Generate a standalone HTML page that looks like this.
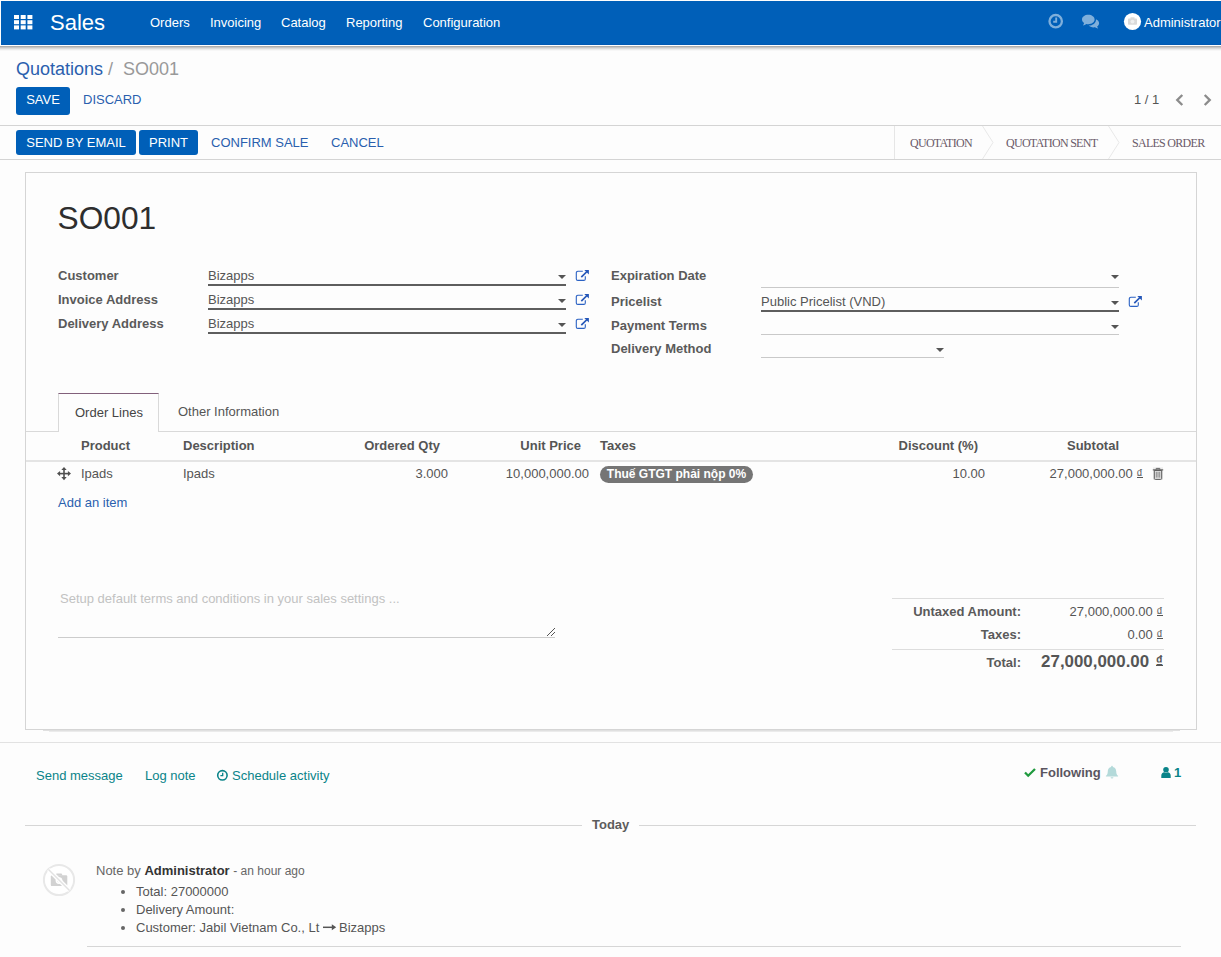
<!DOCTYPE html>
<html>
<head>
<meta charset="utf-8">
<title>SO001 - Odoo</title>
<style>
*{box-sizing:border-box;margin:0;padding:0}
html,body{width:1221px;height:957px;overflow:hidden;background:#fdfdfd}
body{position:relative;font-family:"Liberation Sans",Arial,sans-serif;font-size:13px;color:#4c4c4c;line-height:1}
.a{position:absolute;white-space:nowrap}
.b{font-weight:bold}
.r{text-align:right}
/* navbar */
#nav{left:1px;top:1px;width:1220px;height:44px;background:#005fb8;border-bottom:1px solid #0059b3}
#navsh{left:0;top:45px;width:1221px;height:6px;background:linear-gradient(#fff 0,#fff 1px,#adadad 1px,#adadad 2px,#c6c6c6 2px,#c6c6c6 3px,#dadada 3px,#dadada 4px,#ebebeb 4px,#ebebeb 5px,#f7f7f7 5px,#f7f7f7 6px)}
.nm{color:#fff;font-size:13px;top:15.500px}
/* buttons */
.btn{background:#005fb8;color:#fff;border-radius:3px;text-align:center;font-size:13px}
.lnk{color:#2a5fae;font-size:13px}
.hl{background:#d4d4d4;height:1px}
.lbl{font-weight:bold;color:#5a5a5a;font-size:13px}
.val{color:#555;font-size:13px}
.ul{height:2px;background:#5e5e5e}
.ull{height:1px;background:#c9c9c9}
.dg{position:relative}.dg:after{content:"";position:absolute;left:.5px;right:.5px;bottom:3px;height:1px;background:#555}
.car{width:0;height:0;border-left:4px solid transparent;border-right:4px solid transparent;border-top:4px solid #555}
.th{font-weight:bold;color:#555;font-size:13px;top:439px}
.td{color:#555;font-size:13px;top:467px}
.teal{color:#0a8489;font-size:13px}
.sb{font-family:"Liberation Serif","DejaVu Serif",serif;font-size:12px;letter-spacing:-.72px;color:#6a5a68;top:137px}
</style>
</head>
<body>
<!-- NAVBAR -->
<div class="a" id="nav"></div>
<div class="a" id="navsh"></div>
<svg class="a" style="left:14px;top:15px" width="19" height="15" viewBox="0 0 19 15"><g fill="#fff"><rect x="0" y="0" width="5" height="4"/><rect x="6.7" y="0" width="5" height="4"/><rect x="13.4" y="0" width="5" height="4"/><rect x="0" y="5.2" width="5" height="4"/><rect x="6.7" y="5.2" width="5" height="4"/><rect x="13.4" y="5.2" width="5" height="4"/><rect x="0" y="10.4" width="5" height="4"/><rect x="6.7" y="10.4" width="5" height="4"/><rect x="13.4" y="10.4" width="5" height="4"/></g></svg>
<div class="a" style="left:50px;top:12px;font-size:22px;color:#fff">Sales</div>
<div class="a nm" style="left:150px">Orders</div>
<div class="a nm" style="left:210px">Invoicing</div>
<div class="a nm" style="left:281px">Catalog</div>
<div class="a nm" style="left:346px">Reporting</div>
<div class="a nm" style="left:423px">Configuration</div>
<svg class="a" style="left:1046px;top:12px" width="20" height="20" viewBox="0 0 20 20"><circle cx="9.7" cy="9.2" r="6.2" fill="none" stroke="#7fafdb" stroke-width="2.3"/><path d="M10.2 5.6v4.2h-3" fill="none" stroke="#7fafdb" stroke-width="1.9"/></svg>
<svg class="a" style="left:1080px;top:12px" width="22" height="20" viewBox="0 0 22 20"><g fill="#7fafdb"><path d="M8.3 2.8c3.5 0 6.3 2.1 6.3 4.7s-2.800 4.700-6.300 4.700c-.7 0-1.400-.100-2-.200-.900.700-2 1.200-3.400 1.400.600-.600 1-1.400 1.200-2.300C2.800 10.200 2 8.900 2 7.500 2 4.900 4.800 2.800 8.300 2.800z"/><path d="M15.900 7.300c1.900.700 3.200 2.200 3.200 3.900 0 1.300-.800 2.500-2 3.300.200.800.600 1.500 1.200 2.100-1.300-.200-2.400-.700-3.300-1.300-.500.100-1 .100-1.500.100-2 0-3.700-.700-4.800-1.800 4-.100 7.300-2.600 7.300-5.900 0-.100 0-.300-.100-.400z"/></g></svg>
<svg class="a" style="left:1123px;top:12px" width="19" height="19" viewBox="0 0 19 19"><circle cx="9.500" cy="9.500" r="8.600" fill="#fff"/><g fill="#dadada"><rect x="5" y="6.500" width="9" height="6.200" rx=".8"/><rect x="7.500" y="5.300" width="4" height="2"/></g><circle cx="9.500" cy="9.600" r="1.900" fill="#efefef"/></svg>
<div class="a nm" style="left:1144px">Administrator</div>

<!-- CONTROL PANEL -->
<div class="a" style="left:16px;top:60px;font-size:18px;color:#2a5fae">Quotations<span style="color:#999"> /&nbsp; SO001</span></div>
<div class="a btn" style="left:16px;top:87px;width:54px;height:28px;line-height:26px">SAVE</div>
<div class="a lnk" style="left:83px;top:93px">DISCARD</div>
<div class="a" style="left:1134px;top:93px;font-size:13px;color:#555">1 / 1</div>
<svg class="a" style="left:1172px;top:92px" width="44" height="16" viewBox="0 0 44 16"><path d="M10.300 3L5.300 8l5 5M32.700 3L37.700 8l-5 5" fill="none" stroke="#8c8c8c" stroke-width="2.400"/></svg>
<div class="a hl" style="left:0;top:125px;width:1221px"></div>

<!-- STATUS BAR -->
<div class="a btn" style="left:16px;top:130px;width:120px;height:25px;line-height:25px">SEND BY EMAIL</div>
<div class="a btn" style="left:139px;top:130px;width:59px;height:25px;line-height:25px">PRINT</div>
<div class="a lnk" style="left:211px;top:136px">CONFIRM SALE</div>
<div class="a lnk" style="left:331px;top:136px">CANCEL</div>
<div class="a" style="left:894px;top:126px;width:1px;height:33px;background:#e6e6e6"></div>
<svg class="a" style="left:980px;top:126px" width="140" height="33" viewBox="0 0 140 33"><path d="M2.500 0L13 16.500 2.500 33M128.500 0L139 16.500 128.500 33" fill="none" stroke="#e8e8e8" stroke-width="1"/></svg>
<div class="a sb" style="left:910px">QUOTATION</div>
<div class="a sb" style="left:1006px">QUOTATION SENT</div>
<div class="a sb" style="left:1132px">SALES ORDER</div>
<div class="a hl" style="left:0;top:159px;width:1221px"></div>

<!-- SHEET -->
<div class="a" id="sheet" style="left:25px;top:172px;width:1172px;height:558px;border:1px solid #d5d5d5;background:#fdfdfd"></div>
<div class="a" style="left:43px;top:730px;width:1137px;height:1px;background:#e0e0e0"></div>
<div class="a" style="left:49px;top:731px;width:1124px;height:1px;background:#ebebeb"></div>
<div class="a" style="left:57.500px;top:203px;font-size:31.700px;color:#2e2e2e">SO001</div>

<div class="a lbl" style="left:58px;top:269px">Customer</div>
<div class="a lbl" style="left:58px;top:293px">Invoice Address</div>
<div class="a lbl" style="left:58px;top:317px">Delivery Address</div>
<div class="a val" style="left:208px;top:269px">Bizapps</div>
<div class="a val" style="left:208px;top:293px">Bizapps</div>
<div class="a val" style="left:208px;top:317px">Bizapps</div>
<div class="a ul" style="left:208px;top:284px;width:358px"></div>
<div class="a ul" style="left:208px;top:308px;width:358px"></div>
<div class="a ul" style="left:208px;top:332px;width:358px"></div>
<div class="a car" style="left:558px;top:275px"></div>
<div class="a car" style="left:558px;top:299px"></div>
<div class="a car" style="left:558px;top:323px"></div>

<div class="a lbl" style="left:611px;top:269px">Expiration Date</div>
<div class="a lbl" style="left:611px;top:295px">Pricelist</div>
<div class="a lbl" style="left:611px;top:319px">Payment Terms</div>
<div class="a lbl" style="left:611px;top:342px">Delivery Method</div>
<div class="a val" style="left:761px;top:295px">Public Pricelist (VND)</div>
<div class="a ull" style="left:761px;top:287px;width:358px"></div>
<div class="a ul" style="left:761px;top:310px;width:358px"></div>
<div class="a ull" style="left:761px;top:334px;width:358px"></div>
<div class="a ull" style="left:761px;top:357px;width:183px"></div>
<div class="a car" style="left:1111px;top:275px"></div>
<div class="a car" style="left:1111px;top:301px"></div>
<div class="a car" style="left:1111px;top:325px"></div>
<div class="a car" style="left:936px;top:348px"></div>

<svg class="a" style="left:575px;top:269px" width="15" height="14" viewBox="0 0 15 14"><path d="M7.800 2.300H2.800a1.500 1.500 0 0 0-1.500 1.500v6.100a1.500 1.500 0 0 0 1.500 1.500h6a1.500 1.500 0 0 0 1.500-1.500V7.200" fill="none" stroke="#2b62c4" stroke-width="1.100"/><path d="M6.300 8.200L12 2.500" stroke="#2456b8" stroke-width="1.700" fill="none"/><path d="M9.300 1h4.600v4.600z" fill="#2456b8"/></svg>
<svg class="a" style="left:575px;top:293px" width="15" height="14" viewBox="0 0 15 14"><path d="M7.800 2.300H2.800a1.500 1.500 0 0 0-1.500 1.500v6.100a1.500 1.500 0 0 0 1.500 1.500h6a1.500 1.500 0 0 0 1.500-1.500V7.200" fill="none" stroke="#2b62c4" stroke-width="1.100"/><path d="M6.300 8.200L12 2.500" stroke="#2456b8" stroke-width="1.700" fill="none"/><path d="M9.300 1h4.600v4.600z" fill="#2456b8"/></svg>
<svg class="a" style="left:575px;top:317px" width="15" height="14" viewBox="0 0 15 14"><path d="M7.800 2.300H2.800a1.500 1.500 0 0 0-1.500 1.500v6.100a1.500 1.500 0 0 0 1.500 1.500h6a1.500 1.500 0 0 0 1.500-1.500V7.200" fill="none" stroke="#2b62c4" stroke-width="1.100"/><path d="M6.300 8.200L12 2.500" stroke="#2456b8" stroke-width="1.700" fill="none"/><path d="M9.300 1h4.600v4.600z" fill="#2456b8"/></svg>
<svg class="a" style="left:1128px;top:295px" width="15" height="14" viewBox="0 0 15 14"><path d="M7.800 2.300H2.800a1.500 1.500 0 0 0-1.500 1.500v6.100a1.500 1.500 0 0 0 1.500 1.500h6a1.500 1.500 0 0 0 1.500-1.500V7.200" fill="none" stroke="#2b62c4" stroke-width="1.100"/><path d="M6.300 8.200L12 2.500" stroke="#2456b8" stroke-width="1.700" fill="none"/><path d="M9.300 1h4.600v4.600z" fill="#2456b8"/></svg>
<!-- TABS -->
<div class="a hl" style="left:26px;top:431px;width:1170px;background:#d9d9d9"></div>
<div class="a" style="left:58px;top:393px;width:101px;height:39px;border:1px solid #d9d9d9;border-top:1px solid #82607b;border-bottom:none;background:#fdfdfd"></div>
<div class="a" style="left:75px;top:406px;font-size:13px;color:#444">Order Lines</div>
<div class="a" style="left:178px;top:405px;font-size:13px;color:#555">Other Information</div>

<!-- TABLE -->
<div class="a th" style="left:81px">Product</div>
<div class="a th" style="left:183px">Description</div>
<div class="a th r" style="right:781px">Ordered Qty</div>
<div class="a th r" style="right:640px">Unit Price</div>
<div class="a th" style="left:600px">Taxes</div>
<div class="a th r" style="right:243px">Discount (%)</div>
<div class="a th r" style="right:102px">Subtotal</div>
<div class="a" style="left:26px;top:460px;width:1170px;height:2px;background:#e4e4e4"></div>
<svg class="a" style="left:57px;top:467px" width="14" height="14" viewBox="0 0 14 14"><g fill="#505050"><rect x="2" y="5.800" width="10" height="1.600"/><rect x="6.200" y="1.600" width="1.600" height="10"/><path d="M0 6.600L3.100 3.900v5.400zM14 6.600L10.900 3.900v5.400zM7 0L4.300 3.100h5.400zM7 13.200L4.300 10.100h5.400z"/></g></svg>
<div class="a td" style="left:81px">Ipads</div>
<div class="a td" style="left:183px">Ipads</div>
<div class="a td r" style="right:773px">3.000</div>
<div class="a td r" style="right:632px">10,000,000.00</div>
<div class="a" style="left:600px;top:466px;width:153px;height:17px;border-radius:9px;background:#757575;color:#fff;font-weight:bold;font-size:12px;line-height:17px;text-align:center">Thuế GTGT phải nộp 0%</div>
<div class="a td r" style="right:236px">10.00</div>
<div class="a td r" style="right:78px">27,000,000.00 <span class="dg">₫</span></div>
<svg class="a" style="left:1152px;top:467px" width="12" height="14" viewBox="0 0 12 14"><rect x="1" y=".3" width="10" height="12.700" fill="#ececec"/><path d="M2.300 3.400h7.400v8a1 1 0 0 1-1 1H3.300a1 1 0 0 1-1-1z" fill="#e2e2e2" stroke="#5c5c5c" stroke-width="1"/><path d="M.8 2.900h10.400" stroke="#555" stroke-width="1.100"/><path d="M4.200 2.600V1.400h3.600v1.200" fill="none" stroke="#666" stroke-width="1"/><path d="M4.300 4.800v5.800M6 4.800v5.800M7.700 4.800v5.800" stroke="#777" stroke-width=".8"/></svg>
<div class="a lnk" style="left:58px;top:496px">Add an item</div>

<!-- TERMS -->
<div class="a" style="left:60px;top:592px;font-size:13px;color:#c2c2c2">Setup default terms and conditions in your sales settings ...</div>
<div class="a ull" style="left:58px;top:637px;width:497px;background:#ccc"></div>
<svg class="a" style="left:546px;top:627px" width="10" height="10" viewBox="0 0 10 10"><path d="M1 9L9 1M5 9L9 5" stroke="#555" stroke-width="1" fill="none"/></svg>

<!-- TOTALS -->
<div class="a hl" style="left:892px;top:598px;width:272px;background:#ddd"></div>
<div class="a lbl r" style="right:200px;top:605px">Untaxed Amount:</div>
<div class="a val r" style="right:58px;top:605px">27,000,000.00 <span class="dg">₫</span></div>
<div class="a lbl r" style="right:200px;top:628px">Taxes:</div>
<div class="a val r" style="right:58px;top:628px">0.00 <span class="dg">₫</span></div>
<div class="a hl" style="left:892px;top:649px;width:272px;background:#ddd"></div>
<div class="a lbl r" style="right:200px;top:656px">Total:</div>
<div class="a r b" style="right:58px;top:654px;font-size:16.9px;color:#555">27,000,000.00 <span class="dg" style="top:-1px;font-size:14px;margin-left:2px">₫</span></div>

<!-- CHATTER -->
<div class="a hl" style="left:0;top:742px;width:1221px;background:#e2e2e2"></div>
<div class="a teal" style="left:36px;top:769px">Send message</div>
<div class="a teal" style="left:145px;top:769px">Log note</div>
<svg class="a" style="left:216px;top:769px" width="13" height="13" viewBox="0 0 13 13"><circle cx="6.400" cy="6.300" r="4.700" fill="none" stroke="#0a8489" stroke-width="1.600"/><path d="M6.700 3.800v2.900H4.400" fill="none" stroke="#0a8489" stroke-width="1.300"/></svg>
<div class="a teal" style="left:232px;top:769px">Schedule activity</div>
<svg class="a" style="left:1023px;top:767px" width="14" height="11" viewBox="0 0 14 11"><path d="M2 5.500l3.200 3.200L12 2" fill="none" stroke="#1f9a3e" stroke-width="2.300"/></svg>
<div class="a b" style="left:1040px;top:766px;font-size:13px;color:#5a5560">Following</div>
<svg class="a" style="left:1105px;top:765px" width="14" height="15" viewBox="0 0 14 15"><g fill="#b4dada"><path d="M7 .8c.5 0 .9.400.9.900v.300c2 .400 3.300 2 3.300 4.200 0 2.700.800 3.800 1.900 4.600v.700H.9v-.700C2 10 2.800 8.900 2.800 6.200c0-2.200 1.300-3.800 3.300-4.200v-.300c0-.500.400-.900.900-.900z"/><path d="M5.600 12.200h2.800a1.400 1.400 0 0 1-2.800 0z"/></g></svg>
<svg class="a" style="left:1160px;top:766px" width="12" height="13" viewBox="0 0 12 13"><g fill="#0a8489"><circle cx="6" cy="3.800" r="2.800"/><path d="M1.300 12V9.600c0-1.800 1.300-3.100 3-3.300.500.400 1.100.600 1.700.600s1.200-.200 1.700-.600c1.700.200 3 1.500 3 3.300V12z"/></g></svg>
<div class="a b" style="left:1174px;top:766px;font-size:13px;color:#0a8489">1</div>

<div class="a hl" style="left:25px;top:825px;width:557px;background:#d6d6d6"></div>
<div class="a hl" style="left:639px;top:825px;width:557px;background:#d6d6d6"></div>
<div class="a b" style="left:592px;top:818px;font-size:13px;color:#5c5c5c">Today</div>

<div class="a" style="left:96px;top:863.5px;font-size:13px;color:#666">Note by <b style="color:#333">Administrator</b> <span style="font-size:12px;color:#666">- an hour ago</span></div>
<div class="a val" style="left:136px;top:885px">Total: 27000000</div>
<div class="a val" style="left:136px;top:903px">Delivery Amount:</div>
<div class="a val" style="left:136px;top:921px">Customer: Jabil Vietnam Co., Lt</div>
<svg class="a" style="left:322px;top:922px" width="15" height="11" viewBox="0 0 15 11"><path d="M1 5.300h9.500" stroke="#555" stroke-width="1.500" fill="none"/><path d="M9.800 2.300L14.200 5.300 9.800 8.300z" fill="#555"/></svg>
<div class="a val" style="left:339px;top:921px">Bizapps</div>
<div class="a" style="left:121px;top:890px;width:4px;height:4px;border-radius:50%;background:#666"></div>
<div class="a" style="left:121px;top:908px;width:4px;height:4px;border-radius:50%;background:#666"></div>
<div class="a" style="left:121px;top:926px;width:4px;height:4px;border-radius:50%;background:#666"></div>
<svg class="a" style="left:42px;top:863px" width="34" height="34" viewBox="0 0 34 34"><circle cx="17" cy="17" r="15.100" fill="#fff" stroke="#e8e8e8" stroke-width="2"/><g fill="#d2d2d2"><rect x="8.800" y="12.300" width="16.500" height="10.800" rx="1.200"/><path d="M13.300 12.500l1.200-2h5l1.200 2z"/></g><circle cx="17" cy="17.600" r="3.400" fill="#fff"/><circle cx="17" cy="17.600" r="1.900" fill="#d8d8d8"/><path d="M6.500 6.500l21 21" stroke="#fff" stroke-width="4"/><path d="M6.500 6.500l21 21" stroke="#e2e2e2" stroke-width="1.500"/></svg>
<div class="a hl" style="left:87px;top:946px;width:1094px;background:#d6d6d6"></div>
</body>
</html>
